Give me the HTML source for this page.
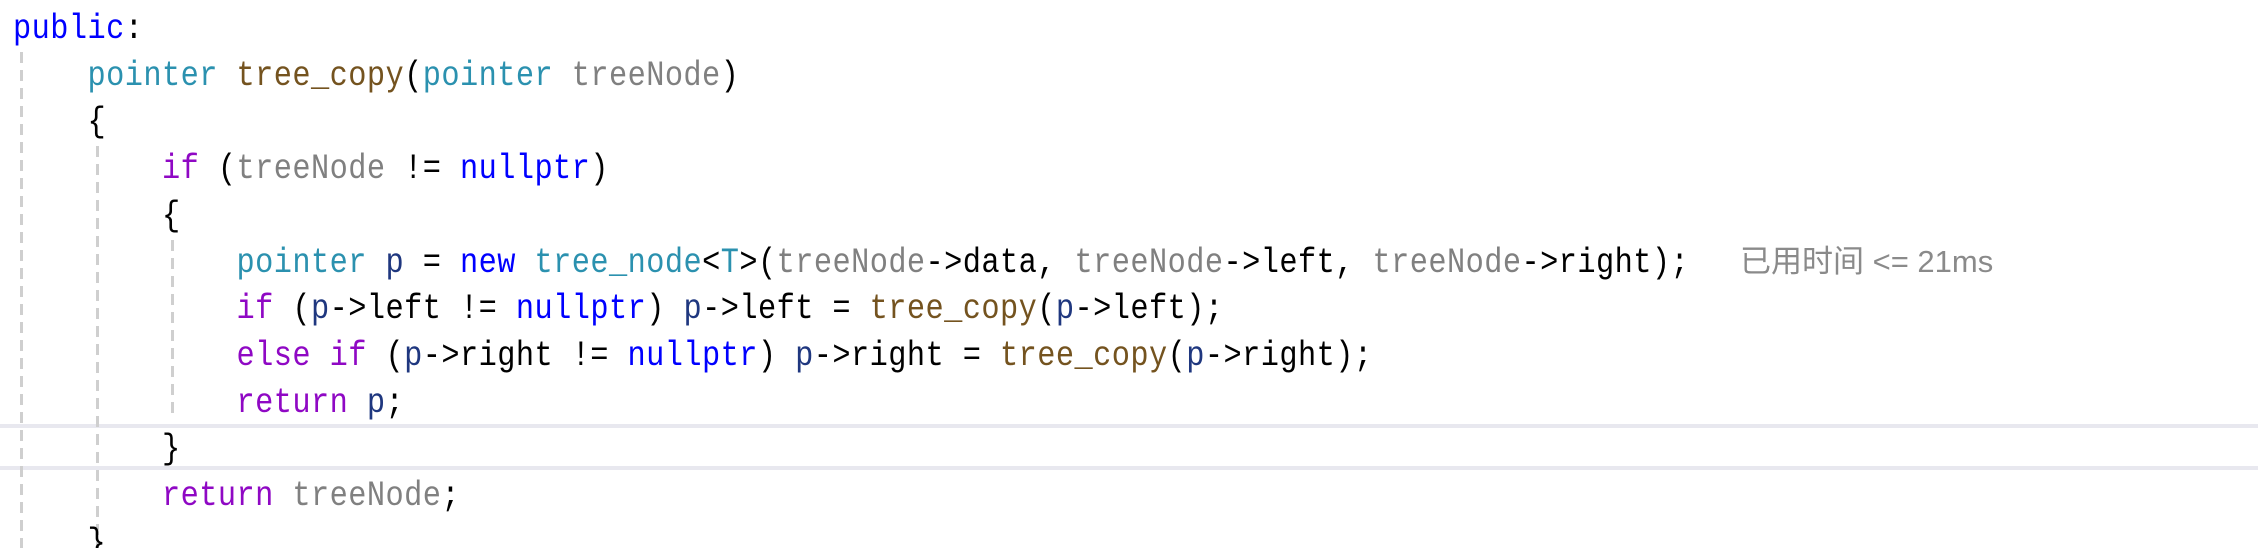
<!DOCTYPE html>
<html><head><meta charset="utf-8"><style>
html,body{margin:0;padding:0;background:#fff;width:2258px;height:548px;overflow:hidden;position:relative}
pre{position:absolute;left:13px;top:6px;margin:0;font-family:"Liberation Mono",monospace;font-size:35px;letter-spacing:0.5px;line-height:46.7px;color:#000;transform:scaleX(0.866);transform-origin:0 0}
.hl{position:absolute;left:0;width:2258px;height:4px;background:#e8e8ef}
.g{position:absolute;width:3px;background:repeating-linear-gradient(to bottom,#cfcfcf 0 11px,transparent 11px 18px)}
.k{color:#0000ff}.t{color:#2b91af}.f{color:#74531f}.pa{color:#808080}.c{color:#8f08c4}.v{color:#1f377f}
.hint{position:absolute;left:1740px;top:244px;font-family:"Liberation Sans","Noto Sans CJK SC",sans-serif;font-size:31px;line-height:36px;color:#8a8a8a;white-space:nowrap}
</style></head><body>
<div class="hl" style="top:424px"></div>
<div class="hl" style="top:466px"></div>
<div class="g" style="left:20px;top:52px;height:500px"></div>
<div class="g" style="left:96px;top:146px;height:410px"></div>
<div class="g" style="left:171px;top:240px;height:180px"></div>
<pre><span class="k">public</span>:
    <span class="t">pointer</span> <span class="f">tree_copy</span>(<span class="t">pointer</span> <span class="pa">treeNode</span>)
    {
        <span class="c">if</span> (<span class="pa">treeNode</span> != <span class="k">nullptr</span>)
        {
            <span class="t">pointer</span> <span class="v">p</span> = <span class="k">new</span> <span class="t">tree_node</span>&lt;<span class="t">T</span>&gt;(<span class="pa">treeNode</span>-&gt;data, <span class="pa">treeNode</span>-&gt;left, <span class="pa">treeNode</span>-&gt;right);
            <span class="c">if</span> (<span class="v">p</span>-&gt;left != <span class="k">nullptr</span>) <span class="v">p</span>-&gt;left = <span class="f">tree_copy</span>(<span class="v">p</span>-&gt;left);
            <span class="c">else if</span> (<span class="v">p</span>-&gt;right != <span class="k">nullptr</span>) <span class="v">p</span>-&gt;right = <span class="f">tree_copy</span>(<span class="v">p</span>-&gt;right);
            <span class="c">return</span> <span class="v">p</span>;
        }
        <span class="c">return</span> <span class="pa">treeNode</span>;
    }</pre>
<div class="hint">已用时间 &lt;= 21ms</div>
</body></html>
